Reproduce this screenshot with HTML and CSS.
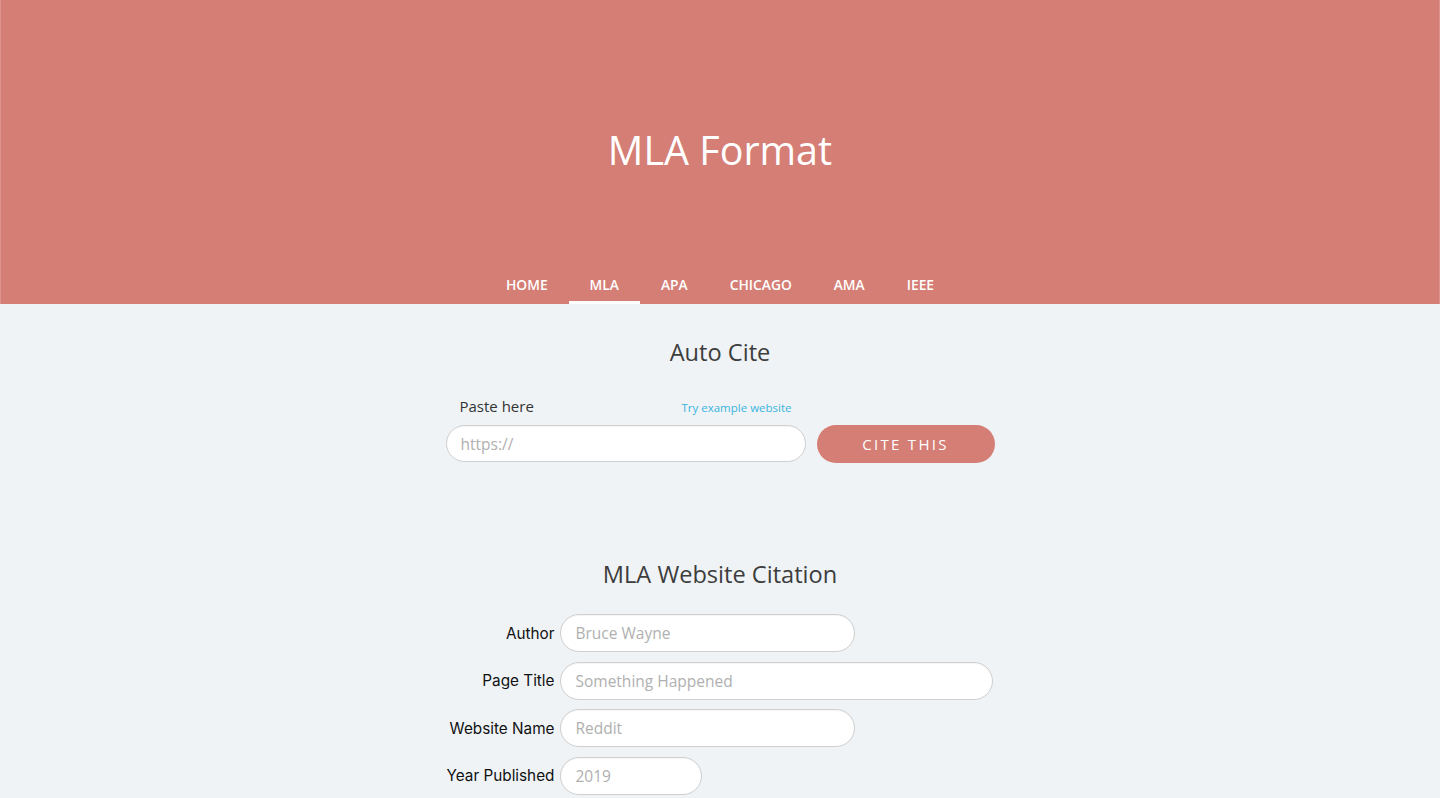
FILE: index.html
```html
<!DOCTYPE html>
<html lang="en">
<head>
<meta charset="utf-8">
<title>MLA Format</title>
<link rel="stylesheet" href="styles.css">
</head>
<body>
<header class="hero">
  <h1 class="hero-title">MLA Format</h1>
  <nav class="nav">
    <a class="nav-item" href="#">HOME</a>
    <a class="nav-item active" href="#">MLA</a>
    <a class="nav-item" href="#">APA</a>
    <a class="nav-item" href="#">CHICAGO</a>
    <a class="nav-item" href="#">AMA</a>
    <a class="nav-item" href="#">IEEE</a>
  </nav>
</header>
<main class="main">
  <section class="autocite">
    <h2 class="section-title">Auto Cite</h2>
    <div class="cite-row">
      <div class="cite-field">
        <div class="cite-labels">
          <span class="paste-label">Paste here</span>
          <a class="example-link" href="#">Try example website</a>
        </div>
        <input class="pill-input url-input" type="text" placeholder="https://">
      </div>
      <button class="cite-btn">CITE THIS</button>
    </div>
  </section>
  <section class="citation">
    <h2 class="section-title">MLA Website Citation</h2>
    <div class="form-grid">
      <label class="form-label">Author</label>
      <input class="pill-input w-md" type="text" placeholder="Bruce Wayne">
      <label class="form-label">Page Title</label>
      <input class="pill-input w-lg" type="text" placeholder="Something Happened">
      <label class="form-label">Website Name</label>
      <input class="pill-input w-md" type="text" placeholder="Reddit">
      <label class="form-label">Year Published</label>
      <input class="pill-input w-sm" type="text" placeholder="2019">
    </div>
  </section>
</main>
</body>
</html>
```
FILE: styles.css
```css
* { box-sizing: border-box; }
html, body { margin: 0; padding: 0; }
body {
  background: #eff3f6;
  font-family: "Open Sans", "Lato", sans-serif;
  color: #444;
  height: 798px;
  overflow: hidden;
}
.hero {
  background: #d57e75;
  height: 304px;
  display: flex;
  flex-direction: column;
  align-items: center;
  border-left: 1px solid #dc948c;
  border-right: 1px solid #dc948c;
}
.hero-title {
  margin: 0;
  margin-top: 122px;
  font-size: 39.5px;
  line-height: 56px;
  font-weight: 400;
  color: #fff;
}
.nav {
  margin-top: auto;
  display: flex;
}
.nav-item {
  display: block;
  padding: 0 21px;
  height: 40px;
  line-height: 42px;
  font-size: 13.8px;
  font-weight: 600;
  color: #fff;
  text-decoration: none;
  border-bottom: 3px solid transparent;
}
.nav-item.active { border-bottom-color: #fff; }
.main {
  display: flex;
  flex-direction: column;
  align-items: center;
}
.section-title {
  margin: 0;
  font-size: 23.6px;
  font-weight: 400;
  color: #3d3d3d;
  line-height: 30px;
}
.autocite {
  display: flex;
  flex-direction: column;
  align-items: center;
  padding-top: 33px;
}
.cite-row {
  margin-top: 28px;
  display: flex;
  align-items: flex-end;
  gap: 11px;
}
.cite-field { display: flex; flex-direction: column; width: 360px; }
.cite-labels {
  display: flex;
  justify-content: space-between;
  align-items: center;
  padding: 0 14px;
  height: 22px;
  margin-bottom: 8px;
}
.paste-label { font-size: 15px; color: #333; }
.example-link { font-size: 11.5px; color: #3ab4de; text-decoration: none; margin-top: 2px; }
.pill-input {
  height: 37px;
  border: 1px solid #cfcfcf;
  border-radius: 19px;
  background: #fff;
  padding: 0 14px;
  font-family: "Open Sans", "Lato", sans-serif;
  font-size: 15.5px;
  color: #333;
  outline: none;
  box-shadow: inset 0 1px 1px rgba(0,0,0,0.04);
}
.pill-input::placeholder { color: #b0b0b0; }
.url-input { width: 360px; }
.cite-btn {
  width: 178px;
  height: 38px;
  margin-bottom: -0.5px;
  border: none;
  border-radius: 19px;
  background: #d57e75;
  color: #fff;
  font-family: "Open Sans", "Lato", sans-serif;
  font-size: 15px;
  letter-spacing: 2.3px;
  cursor: pointer;
}
.citation {
  display: flex;
  flex-direction: column;
  align-items: center;
  padding-top: 97px;
}
.form-grid {
  margin-top: 25px;
  display: grid;
  grid-template-columns: auto auto;
  column-gap: 6px;
  row-gap: 9.5px;
  align-items: center;
  justify-items: start;
}
.form-grid .pill-input { height: 38px; }
.form-label {
  justify-self: end;
  font-family: "Inter", "Liberation Sans", sans-serif;
  font-size: 15.3px;
  color: #111;
}
.w-sm { width: 142px; }
.w-md { width: 295px; }
.w-lg { width: 433px; }
```
